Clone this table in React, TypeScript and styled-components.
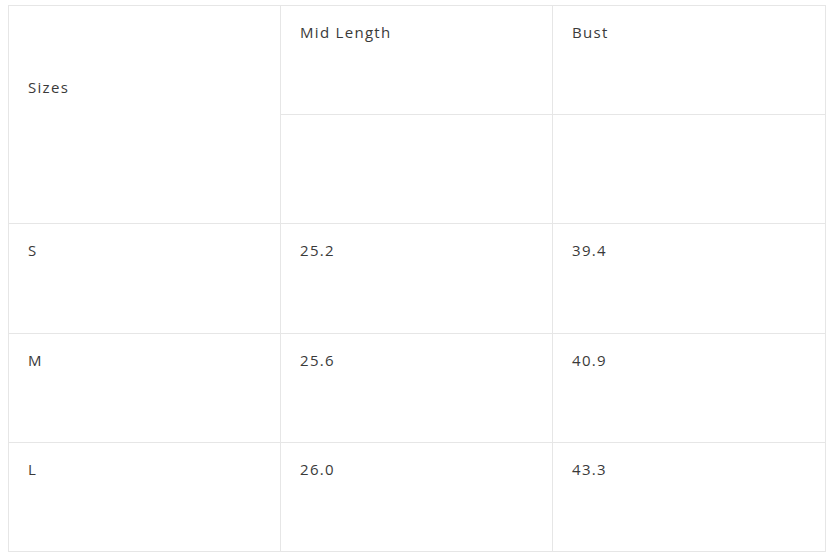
import React from "react";
import styled, { createGlobalStyle } from "styled-components";

const Global = createGlobalStyle`
  html, body { margin: 0; padding: 0; background: #fff; }
  body { padding: 5px 8px; font-family: "Open Sans", "Noto Sans", sans-serif; }
`;

const Table = styled.table`
  width: 817px;
  border-collapse: collapse;
  table-layout: fixed;
  color: #3a3a3a;
  font-size: 15px;
  line-height: 22px;
  letter-spacing: 1.3px;
`;

const Row = styled.tr<{ $h?: number }>`
  height: ${(p) => p.$h ?? 109}px;
`;

const Cell = styled.td<{ $top?: number }>`
  border: 1px solid #e6e6e6;
  vertical-align: top;
  padding: ${(p) => p.$top ?? 15}px 20px 0 19px;
  box-sizing: border-box;
`;

const rows = [
  ["S", "25.2", "39.4"],
  ["M", "25.6", "40.9"],
  ["L", "26.0", "43.3"],
];

export default function App() {
  return (
    <>
      <Global />
      <Table>
        <colgroup>
          <col style={{ width: 272 }} />
          <col style={{ width: 272 }} />
          <col style={{ width: 273 }} />
        </colgroup>
        <tbody>
          <Row>
            <Cell rowSpan={2} $top={70}>Sizes</Cell>
            <Cell>Mid Length</Cell>
            <Cell>Bust</Cell>
          </Row>
          <Row>
            <Cell />
            <Cell />
          </Row>
          {rows.map((r, ri) => (
            <Row key={r[0]} $h={ri === 0 ? 110 : 109}>
              {r.map((c, i) => (
                <Cell key={i}>{c}</Cell>
              ))}
            </Row>
          ))}
        </tbody>
      </Table>
    </>
  );
}
